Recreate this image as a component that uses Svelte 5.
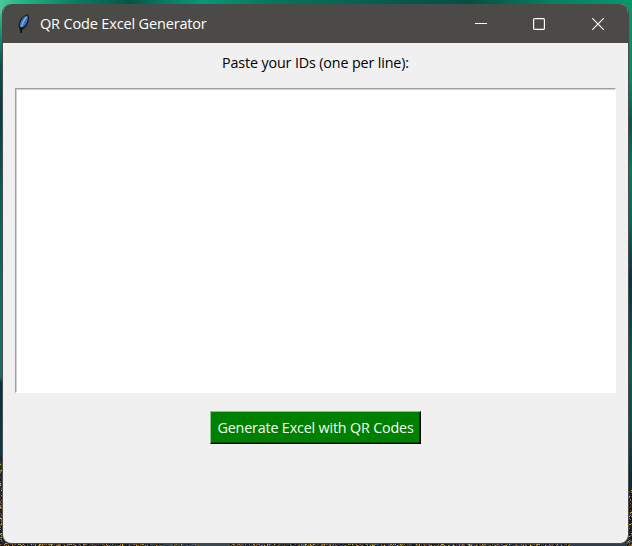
<script>
  let ids = $state('');

  // City lights of the wallpaper, visible along the window's lower edges
  const palette = ['#10151d', '#211f2b', '#c9a92e', '#4a3c22', '#171b26', '#8c7430', '#0b0e14', '#8a5a2c', '#2a3040'];
  const lights = [];
  let seed = 7;
  function random() {
    seed = (seed * 16807) % 2147483647;
    return seed / 2147483647;
  }
  function scatter(x0, x1, y0, y1, density) {
    for (let y = y0; y < y1; y++) {
      for (let x = x0; x < x1; x++) {
        if (random() < density) {
          lights.push({ x, y, fill: palette[Math.floor(random() * palette.length)] });
        }
      }
    }
  }
  scatter(0, 4, 456, 490, 0.4);
  scatter(0, 5, 490, 546, 0.85);
  scatter(627, 632, 490, 546, 0.85);
  scatter(5, 150, 543, 546, 0.85);
  scatter(150, 200, 543, 546, 0.3);
  scatter(230, 570, 543, 546, 0.8);
</script>

<div class="desktop">
  <svg class="lights" width="632" height="546" shape-rendering="crispEdges" aria-hidden="true">
    {#each lights as l}
      <rect x={l.x} y={l.y} width="1" height="1" fill={l.fill} />
    {/each}
  </svg>
  <main class="window">
    <header>
      <svg class="feather" width="14" height="22" viewBox="0 0 14 22" aria-hidden="true">
        <path d="M3.2 17.6C.9 13.8 1.2 9.6 3.4 6.4C5.4 3.4 8.4 1.3 11.4 1.5C12.6 4.5 12 8.4 10.6 11.2C9.3 14 7 16 4.8 17Z" fill="#1b1f24" />
        <path d="M3.2 14.2C2.4 11.4 3.4 8.4 5.4 5.8C7 3.8 9 2.7 10.6 2.8C11 5.6 10.4 8.4 9 10.8C7.6 13 5.8 14.8 3.2 14.2Z" fill="#3976bd" />
        <path d="M9.6 3.8C7.6 6 5.6 9.5 4.4 13.6" fill="none" stroke="#8bbcea" stroke-width="1.1" />
        <path d="M4.5 14.5L4 20" fill="none" stroke="#0b0b0b" stroke-width="1.6" />
      </svg>
      <h1>QR Code Excel Generator</h1>
      <div class="controls">
        <button aria-label="Minimize"><svg width="12" height="12"><path d="M0 5.5H12" /></svg></button>
        <button aria-label="Maximize"><svg width="12" height="12"><rect x=".6" y=".6" width="10.8" height="10.8" rx="1" /></svg></button>
        <button aria-label="Close"><svg width="12" height="12"><path d="M.3 .3L11.7 11.7M11.7 .3L.3 11.7" /></svg></button>
      </div>
    </header>
    <section>
      <label for="ids">Paste your IDs (one per line):</label>
      <textarea id="ids" bind:value={ids}></textarea>
      <button class="generate"><span>Generate Excel with QR Codes</span></button>
    </section>
  </main>
</div>

<style>
  :global(body) { margin: 0; }
  .desktop {
    position: relative;
    box-sizing: border-box;
    width: 632px;
    height: 546px;
    padding: 4px 3px 2px 2px;
    overflow: hidden;
    font-family: "Open Sans", "Noto Sans", sans-serif;
    background:
      linear-gradient(90deg, #4bc79b 0, #20b283 25px, #087e60 75px, #04554b 130px, #07806a 170px, #0a977a 205px, #057660 270px, #04594f 400px, #034f48 470px, #06805f 550px, #07976c 632px) 0 0 / 632px 14px no-repeat,
      linear-gradient(#55cda1 0, #159b74 30px, #04544c 65px, #043d4c 110px, #08605b 200px, #187264 350px, #186c62 378px, #062f49 382px, #07384b 430px, #123b43 475px, #242a2d 500px, #17191d 546px) 0 0 / 4px 546px no-repeat,
      linear-gradient(#07976c 0, #078864 80px, #04594f 125px, #047d60 170px, #056a58 220px, #043548 280px, #07604f 370px, #0b4c4b 430px, #062d39 480px, #242a2d 500px, #17191d 546px) 100% 0 / 5px 546px no-repeat,
      linear-gradient(90deg, #25231f, #3b4a50 200px, #303d4a 632px);
  }
  .lights { position: absolute; inset: 0; }
  .window {
    position: relative;
    box-sizing: border-box;
    height: 540px;
    border: 1px solid #4a4946;
    border-top: 0;
    border-radius: 9px;
    overflow: hidden;
    background: #f0f0f0;
  }
  header {
    display: flex;
    align-items: center;
    height: 39px;
    background: #4b4a47;
    color: #fff;
  }
  .feather { margin-left: 14px; flex: none; }
  h1 {
    margin: 0 0 0 9px;
    font-size: 14.5px;
    font-weight: 400;
    line-height: 20px;
    letter-spacing: -.16px;
    white-space: nowrap;
  }
  .controls { display: flex; margin-left: auto; margin-right: 1px; }
  .controls button {
    display: grid;
    place-items: center;
    width: 58.5px;
    height: 39px;
    padding: 0;
    border: 0;
    background: none;
  }
  .controls svg { fill: none; stroke: #fff; stroke-width: 1.15; }
  section {
    display: flex;
    flex-direction: column;
    align-items: center;
    padding: 9px 12px 0;
  }
  label {
    height: 22px;
    font-size: 14.3px;
    line-height: 22px;
    letter-spacing: -.13px;
    color: #000;
    white-space: nowrap;
  }
  textarea {
    box-sizing: border-box;
    align-self: stretch;
    height: 305px;
    margin: 14px 0 18px;
    padding: 2px;
    border: 1px solid;
    border-color: #a0a0a0 #fff #fff #a0a0a0;
    border-radius: 0;
    box-shadow: inset 1px 1px #d0d0d0;
    background: #fff;
    resize: none;
    outline: 0;
  }
  .generate {
    display: grid;
    place-items: center;
    box-sizing: border-box;
    width: 211px;
    height: 33px;
    padding: 0;
    border: 1px solid;
    border-color: #8bc68b #000 #000 #8bc68b;
    box-shadow: inset -1px -1px #004b00;
    background: #008000;
    color: #f5fff5;
    font: 14.3px/22px "Open Sans", "Noto Sans", sans-serif;
    letter-spacing: -.16px;
    white-space: nowrap;
  }
</style>
